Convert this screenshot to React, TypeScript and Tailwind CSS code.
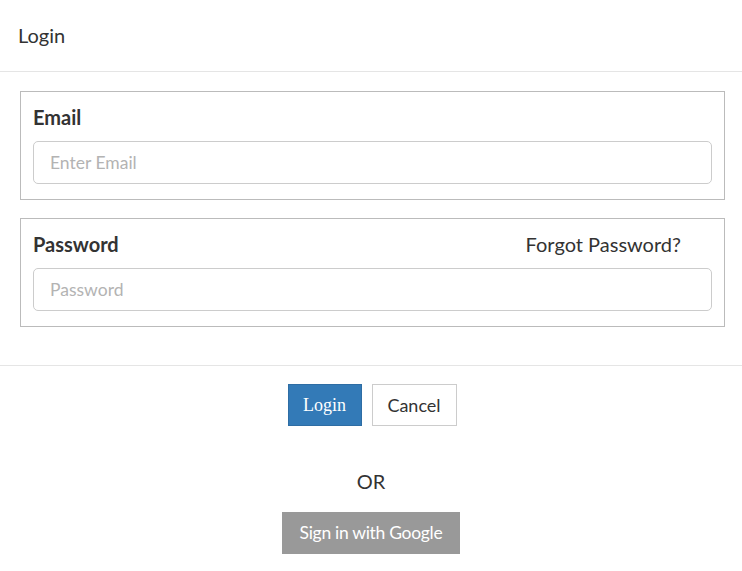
import React, { useState } from "react";

const LATO = "font-['Lato','Liberation_Sans',sans-serif]";

export default function App() {
  const [email, setEmail] = useState("");
  const [password, setPassword] = useState("");

  return (
    <div className={`w-[742px] min-h-[571px] bg-white text-[#333] ${LATO}`}>
      <div className="h-[72px] flex items-center px-[18px] border-b border-[#e5e5e5]">
        <h4 className="text-[20px] leading-[26px] -mt-[2px]">Login</h4>
      </div>

      <div className="pt-[19px] pb-[38px] border-b border-[#e5e5e5]">
        <div className="ml-[20px] w-[705px] border border-[#bbbbbb] px-[12px] pt-[12px] pb-[15px]">
          <label className="block text-[20px] leading-[26px] font-bold text-[#333]">
            Email
          </label>
          <input
            type="email"
            value={email}
            onChange={(e) => setEmail(e.target.value)}
            placeholder="Enter Email"
            className="mt-[11px] block w-full h-[43px] px-[16px] text-[17.5px] border border-[#cccccc] rounded-[5px] outline-none placeholder:text-[#b3b3b3]"
          />
        </div>

        <div className="mt-[18px] ml-[20px] w-[705px] border border-[#bbbbbb] px-[12px] pt-[12px] pb-[15px]">
          <div className="flex justify-between">
            <label className="block text-[20px] leading-[26px] font-bold text-[#333]">
              Password
            </label>
            <span className="text-[20px] leading-[26px] mr-[31px]">
              Forgot Password?
            </span>
          </div>
          <input
            type="password"
            value={password}
            onChange={(e) => setPassword(e.target.value)}
            placeholder="Password"
            className="mt-[11px] block w-full h-[43px] px-[16px] text-[17.5px] border border-[#cccccc] rounded-[5px] outline-none placeholder:text-[#b3b3b3]"
          />
        </div>
      </div>

      <div className="pt-[18px] flex flex-col items-center">
        <div className="flex gap-[10px] pl-[2px]">
          <button className="w-[74px] h-[42px] bg-[#337ab7] border border-[#2e6da4] text-white text-[18px] font-['Liberation_Serif',serif]">
            Login
          </button>
          <button className="w-[85px] h-[42px] bg-white border border-[#cccccc] text-[18px] text-[#333]">
            Cancel
          </button>
        </div>
        <div className="mt-[42px] text-[20px] leading-[26px]">OR</div>
        <button className="mt-[18px] w-[178px] h-[42px] bg-[#999999] text-white text-[17.5px] tracking-[-0.3px]">
          Sign in with Google
        </button>
      </div>
    </div>
  );
}
